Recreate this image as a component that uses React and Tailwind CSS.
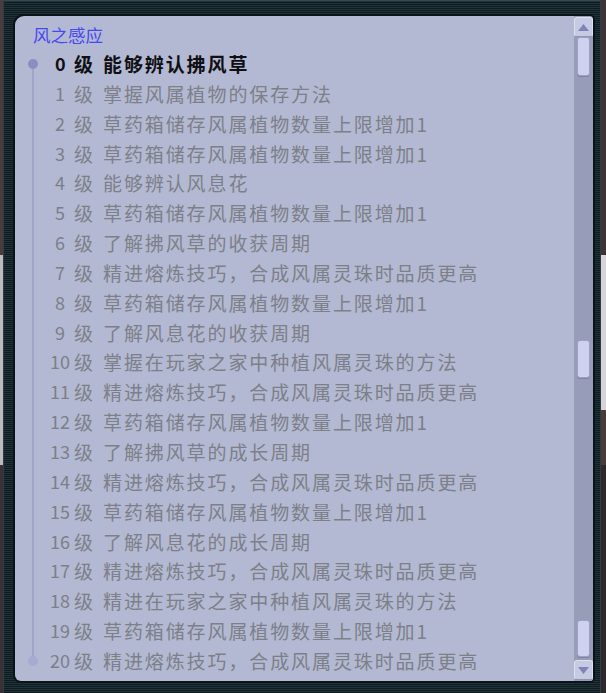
import React from "react";

const rows = [
  ["0", "能够辨认拂风草"],
  ["1", "掌握风属植物的保存方法"],
  ["2", "草药箱储存风属植物数量上限增加1"],
  ["3", "草药箱储存风属植物数量上限增加1"],
  ["4", "能够辨认风息花"],
  ["5", "草药箱储存风属植物数量上限增加1"],
  ["6", "了解拂风草的收获周期"],
  ["7", "精进熔炼技巧，合成风属灵珠时品质更高"],
  ["8", "草药箱储存风属植物数量上限增加1"],
  ["9", "了解风息花的收获周期"],
  ["10", "掌握在玩家之家中种植风属灵珠的方法"],
  ["11", "精进熔炼技巧，合成风属灵珠时品质更高"],
  ["12", "草药箱储存风属植物数量上限增加1"],
  ["13", "了解拂风草的成长周期"],
  ["14", "精进熔炼技巧，合成风属灵珠时品质更高"],
  ["15", "草药箱储存风属植物数量上限增加1"],
  ["16", "了解风息花的成长周期"],
  ["17", "精进熔炼技巧，合成风属灵珠时品质更高"],
  ["18", "精进在玩家之家中种植风属灵珠的方法"],
  ["19", "草药箱储存风属植物数量上限增加1"],
  ["20", "精进熔炼技巧，合成风属灵珠时品质更高"],
];

function Row({ n, text, i }) {
  const first = i === 0;
  const last = i === rows.length - 1;
  const single = n.length === 1;
  const tone = first ? "font-bold text-[#101014]" : "text-[#7d7f89]";
  return (
    <div className="flex h-[29.85px] items-center leading-[29.85px]">
      <div className="relative h-full w-[35px] shrink-0">
        <div
          className={
            first
              ? "absolute left-[17px] top-1/2 bottom-0 w-[2px] bg-[#a0a5cb]"
              : last
              ? "absolute left-[17px] top-0 h-1/2 w-[2px] bg-[#a0a5cb]"
              : "absolute left-[17px] top-0 bottom-0 w-[2px] bg-[#a0a5cb]"
          }
        />
        {first && (
          <div className="absolute left-[13px] top-1/2 h-[10px] w-[10px] -translate-y-1/2 rounded-full bg-[#8a8fbf]" />
        )}
        {last && (
          <div className="absolute left-[13px] top-1/2 h-[10px] w-[10px] -translate-y-1/2 rounded-full bg-[#a6abd0]" />
        )}
      </div>
      <span className={(single ? "pl-[5px] " : "") + "w-[24px] shrink-0 text-[18px] " + tone}>
        {n}
      </span>
      <span className={"w-[29px] shrink-0 " + tone}>级</span>
      <span className={"whitespace-nowrap tracking-[1.9px] " + tone}>{text}</span>
    </div>
  );
}

function Thumb({ h }) {
  return (
    <div
      className={
        h +
        " mx-auto w-[13px] rounded-[3px] border border-[#9da1c8] bg-[#cfd2ef] shadow-[0_1px_0_#7d82a6]"
      }
    />
  );
}

export default function App() {
  return (
    <div
      className="flex h-[693px] w-[606px] overflow-hidden bg-[#3a3032]"
      style={{ fontFamily: '"Noto Sans CJK SC", "Noto Sans", sans-serif' }}
    >
      <div className="flex w-[3px] shrink-0 flex-col">
        <div className="h-[255px] bg-[#4a3c3e]" />
        <div className="h-[210px] bg-[#bdb9bd]" />
        <div className="flex-1 bg-[#3b3033]" />
      </div>
      <div className="flex flex-1 flex-col border-x border-t border-x-[#2c3e45] border-t-[#344951] bg-[repeating-linear-gradient(180deg,#1f3339_0px,#1f3339_1px,#0e1b20_1px,#0e1b20_2px)] pb-[12px] pl-[11px] pr-[7px] pt-[15px]">
        <div className="flex flex-1 overflow-hidden rounded-tl-[9px] rounded-tr-[4px] rounded-bl-[6px] rounded-br-[3px] bg-[#b3b9d2] shadow-[0_0_0_2px_#0a1418]">
          <div className="flex flex-1 flex-col pt-[5px] text-[19px]">
            <div className="h-[28px] pl-[18px] text-[17.5px] leading-[28px] text-[#4747f3]">
              风之感应
            </div>
            {rows.map(([n, t], i) => (
              <Row key={n} n={n} text={t} i={i} />
            ))}
          </div>
          <div className="flex w-[19px] shrink-0 flex-col bg-[#979cb8] pt-[1px]">
            <div className="flex h-[20px] items-center justify-center rounded-[3px] border border-[#dfe1ef] border-b-[#9094b4] bg-[#c6cae2]">
              <svg width="11" height="7" viewBox="0 0 11 7">
                <path d="M5.5 0 L11 7 L0 7 Z" fill="#7e84b6" />
              </svg>
            </div>
            <Thumb h="h-[39px]" />
            <div className="h-[264px] shrink-0" />
            <Thumb h="h-[38px]" />
            <div className="h-[242px] shrink-0" />
            <Thumb h="h-[37px]" />
            <div className="h-[3px] shrink-0" />
            <div className="flex h-[20px] items-center justify-center rounded-[3px] border border-[#dfe1ef] border-b-[#9094b4] bg-[#c6cae2]">
              <svg width="11" height="7" viewBox="0 0 11 7">
                <path d="M0 0 L11 0 L5.5 7 Z" fill="#7e84b6" />
              </svg>
            </div>
          </div>
        </div>
      </div>
      <div className="flex w-[5px] shrink-0 flex-col">
        <div className="h-[255px] bg-[#3d3436]" />
        <div className="h-[155px] bg-[#d6d4d8]" />
        <div className="h-[55px] bg-[#4a3c36]" />
        <div className="flex-1 bg-[#2e2a2c]" />
      </div>
    </div>
  );
}
